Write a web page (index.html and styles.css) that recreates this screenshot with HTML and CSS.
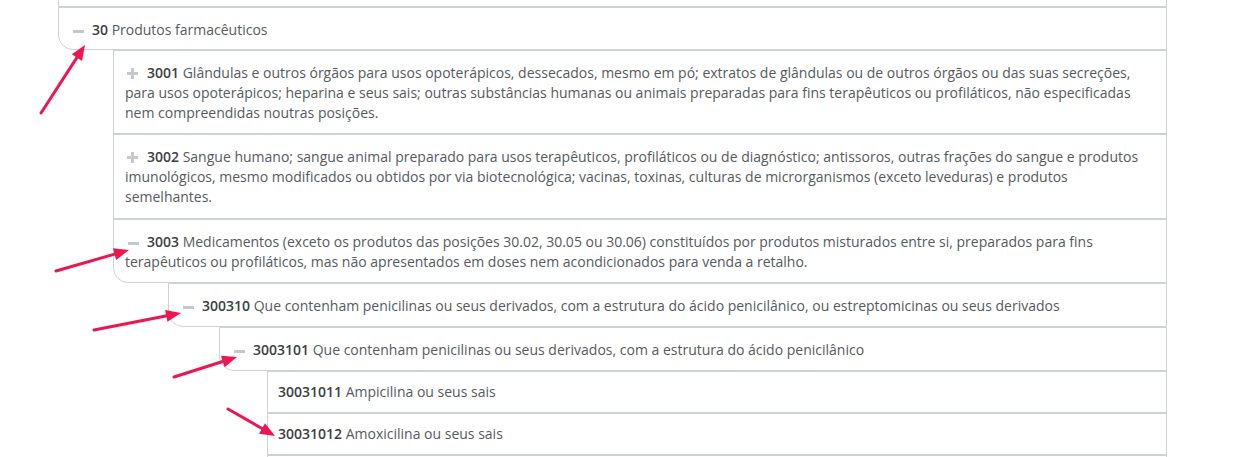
FILE: index.html
```html
<!DOCTYPE html>
<html lang="pt-BR">
<head>
<meta charset="utf-8">
<title>NCM - Capítulo 30</title>
<link rel="stylesheet" href="styles.css">
</head>
<body>
<div class="page">
  <div class="tree">
    <div class="prev"></div>
    <ul class="list">
      <li>
        <div class="row open top"><span class="ico minus"></span><b>30</b> Produtos farmacêuticos</div>
        <ul class="list indent-1">
          <li><div class="row"><span class="ico plus"></span><b>3001</b> Glândulas e outros órgãos para usos opoterápicos, dessecados, mesmo em pó; extratos de glândulas ou de outros órgãos ou das suas secreções, para usos opoterápicos; heparina e seus sais; outras substâncias humanas ou animais preparadas para fins terapêuticos ou profiláticos, não especificadas nem compreendidas noutras posições.</div></li>
          <li><div class="row tall"><span class="ico plus"></span><b>3002</b> Sangue humano; sangue animal preparado para usos terapêuticos, profiláticos ou de diagnóstico; antissoros, outras frações do sangue e produtos imunológicos, mesmo modificados ou obtidos por via biotecnológica; vacinas, toxinas, culturas de microrganismos (exceto leveduras) e produtos semelhantes.</div></li>
          <li>
            <div class="row open"><span class="ico minus"></span><b>3003</b> Medicamentos (exceto os produtos das posições 30.02, 30.05 ou 30.06) constituídos por produtos misturados entre si, preparados para fins terapêuticos ou profiláticos, mas não apresentados em doses nem acondicionados para venda a retalho.</div>
            <ul class="list indent-2">
              <li>
                <div class="row open"><span class="ico minus"></span><b>300310</b> Que contenham penicilinas ou seus derivados, com a estrutura do ácido penicilânico, ou estreptomicinas ou seus derivados</div>
                <ul class="list indent-3">
                  <li>
                    <div class="row open"><span class="ico minus"></span><b>3003101</b> Que contenham penicilinas ou seus derivados, com a estrutura do ácido penicilânico</div>
                    <ul class="list indent-4">
                      <li><div class="row leaf"><b>30031011</b> Ampicilina ou seus sais</div></li>
                      <li><div class="row leaf"><b>30031012</b> Amoxicilina ou seus sais</div></li>
                      <li><div class="row leaf"><b>30031013</b> Penicilina G benzatina</div></li>
                    </ul>
                  </li>
                </ul>
              </li>
            </ul>
          </li>
        </ul>
      </li>
    </ul>
  </div>
  <svg class="arrows" width="1251" height="457" viewBox="0 0 1251 457" xmlns="http://www.w3.org/2000/svg">
    <g stroke="#ec1650" stroke-width="3" stroke-linecap="round" fill="none">
      <line x1="41" y1="113" x2="77.5" y2="56.6"/>
      <line x1="56" y1="271" x2="115.5" y2="253.9"/>
      <line x1="94" y1="330" x2="167" y2="315.7"/>
      <line x1="174" y1="377" x2="223.5" y2="361.3"/>
      <line x1="228" y1="409" x2="262.5" y2="428.8"/>
    </g>
    <g fill="#ec1650">
      <polygon points="85,45 82,61 71.8,54.3"/>
      <polygon points="129,250 116.2,259.9 112.9,248.3"/>
      <polygon points="181,313 167.4,321.8 165.1,310"/>
      <polygon points="237,357 224.5,367.2 220.9,355.8"/>
      <polygon points="275,436 259,433.7 265,423.3"/>
    </g>
  </svg>
</div>
</body>
</html>
```
FILE: styles.css
```css
html, body {
  margin: 0;
  padding: 0;
  background: #ffffff;
}

body {
  font-family: "Open Sans", "Noto Sans", "Liberation Sans", sans-serif;
  font-size: 14px;
  line-height: 20px;
  color: #555a5e;
  overflow: hidden;
}

.page {
  position: relative;
  width: 1251px;
  height: 457px;
  overflow: hidden;
}

.tree {
  margin-left: 58px;
  width: 1109px;
}

.prev {
  height: 6px;
  border: 1px solid #cdd2d6;
  border-top: none;
}

.list {
  list-style: none;
  margin: 0;
  padding: 0;
}

.indent-1 { margin-left: 55px; }
.indent-2 { margin-left: 55px; }
.indent-3 { margin-left: 51px; }
.indent-4 { margin-left: 48px; }

.row {
  border: 1px solid #cdd2d6;
  padding: 12px 15px 10px 11px;
  background: #ffffff;
}

.row.tall {
  padding-bottom: 11px;
}

.row.open {
  border-bottom-left-radius: 15px;
}

.row.top {
  padding-bottom: 9px;
}

.row.leaf {
  padding: 10px 15px 10px 10px;
}

.row b {
  font-weight: 600;
  color: #3b3f42;
}

.ico {
  display: inline-block;
  vertical-align: middle;
}

.ico.minus {
  width: 11px;
  height: 3px;
  margin: 0 8px 0 3px;
  background: #c3c9ce;
}

.ico.plus {
  width: 11px;
  height: 11px;
  margin: -2px 9px 0 2px;
  background:
    linear-gradient(#c3c9ce, #c3c9ce) center / 100% 3px no-repeat,
    linear-gradient(#c3c9ce, #c3c9ce) center / 3px 100% no-repeat;
}

.arrows {
  position: absolute;
  left: 0;
  top: 0;
  pointer-events: none;
}
```
